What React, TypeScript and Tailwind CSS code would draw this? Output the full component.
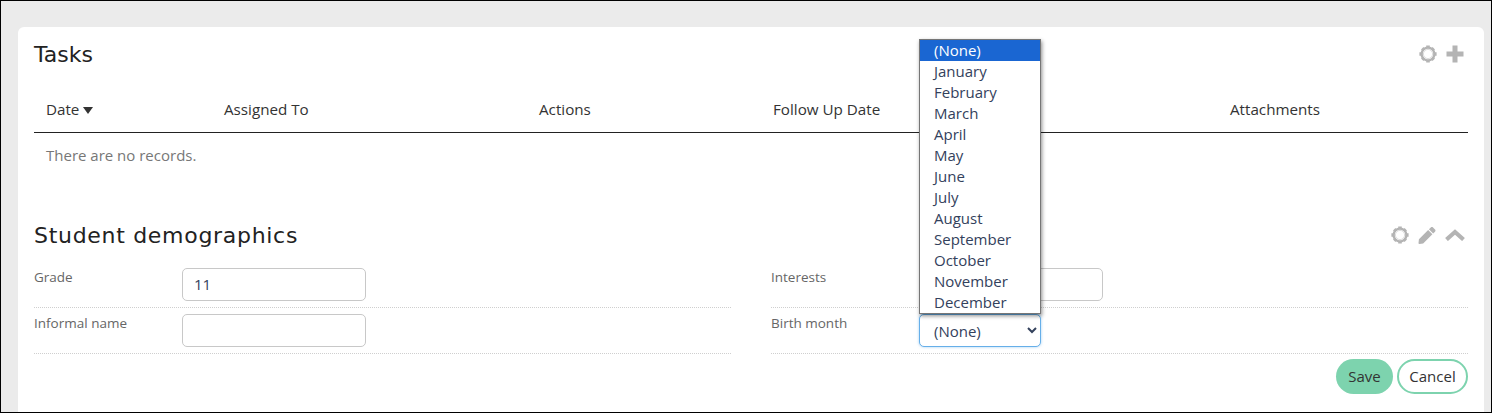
import { FaPen } from 'react-icons/fa'

const months = [
  '(None)',
  'January',
  'February',
  'March',
  'April',
  'May',
  'June',
  'July',
  'August',
  'September',
  'October',
  'November',
  'December',
]

const inputClasses =
  'h-[33px] w-[184px] rounded-[5px] border border-[#c8c8c8] bg-white px-[11px] pb-[2px] text-[15px] text-[#33415c] outline-none'

function Gear() {
  return (
    <svg viewBox="0 0 18 18" className="h-[18px] w-[18px]">
      <circle cx="9" cy="9" r="6.4" fill="none" stroke="#b4b4b4" strokeWidth="2.4" />
      <circle cx="9" cy="9" r="4.6" fill="none" stroke="#dedede" strokeWidth="1" />
      <path
        d="M7.2 0.4h3.6v2.6h-3.6zM7.2 15h3.6v2.6h-3.6zM0.4 7.2h2.6v3.6h-2.6zM15 7.2h2.6v3.6h-2.6zM2 4.4l2.4-2.4 1.8 1.8-2.4 2.4zM11.8 14.2l2.4-2.4 1.8 1.8-2.4 2.4zM13.6 2l2.4 2.4-1.8 1.8-2.4-2.4zM3.8 11.8l2.4 2.4-1.8 1.8-2.4-2.4z"
        fill="#b4b4b4"
      />
    </svg>
  )
}

function PlusIcon() {
  return (
    <svg viewBox="0 0 18 18" className="h-[18px] w-[18px]" fill="#b4b4b4">
      <path d="M6.5 0.5h5v6h6v5h-6v6h-5v-6h-6v-5h6z" />
    </svg>
  )
}

function ChevronIcon() {
  return (
    <svg viewBox="0 0 20 12" className="h-[12px] w-[20px]" fill="none" stroke="#b4b4b4" strokeWidth="4.2">
      <path d="M1.5 10.5L10 3l8.5 7.5" />
    </svg>
  )
}

function FieldRow({ label, children }: { label: string; children: React.ReactNode }) {
  return (
    <div className="flex h-[46px] border-b border-dotted border-[#cfcfcf] pt-[6px]">
      <label className="w-[148px] text-[13.5px] leading-[18px] text-[#666]">{label}</label>
      {children}
    </div>
  )
}

export default function App() {
  return (
    <div className="h-[413px] w-[1492px] overflow-hidden border border-black bg-[#ebebeb] pt-[26px] pl-[17px] pr-[7px] font-['Open_Sans',sans-serif]">
      <div className="relative h-[400px] rounded-[6px] bg-white px-4 pt-[12px]">
        <div className="flex h-[30px] items-center justify-between">
          <h2 className="font-['DejaVu_Sans',sans-serif] text-[22px] font-normal text-[#222]">Tasks</h2>
          <div className="mr-[4px] flex items-center gap-[9px]">
            <Gear />
            <PlusIcon />
          </div>
        </div>

        <div className="mt-[20px] grid h-[44px] grid-cols-[178px_315px_234px_457px_1fr] items-center border-b border-[#222] pb-[2px] pl-3 text-[15.2px] text-[#333]">
          <span className="flex items-center gap-[4px]">
            Date
            <span className="mt-[2px] border-x-[5px] border-t-[7px] border-x-transparent border-t-[#333]" />
          </span>
          <span>Assigned To</span>
          <span>Actions</span>
          <span>Follow Up Date</span>
          <span>Attachments</span>
        </div>
        <p className="mt-[11px] pl-3 text-[15px] leading-[22px] text-[#777]">There are no records.</p>

        <div className="mt-[54px] flex h-[30px] items-center justify-between">
          <h2 className="font-['DejaVu_Sans',sans-serif] text-[22px] font-normal tracking-[0.7px] text-[#222]">
            Student demographics
          </h2>
          <div className="mr-[3px] flex items-center gap-[9px]">
            <Gear />
            <FaPen className="h-[17px] w-[18px] text-[#b4b4b4]" />
            <ChevronIcon />
          </div>
        </div>

        <div className="mt-[12px] grid grid-cols-[697px_697px] gap-x-[40px]">
          <div>
            <FieldRow label="Grade">
              <input className={inputClasses} defaultValue="11" />
            </FieldRow>
            <FieldRow label="Informal name">
              <input className={inputClasses} />
            </FieldRow>
          </div>
          <div>
            <FieldRow label="Interests">
              <input className={inputClasses} />
            </FieldRow>
            <FieldRow label="Birth month">
              <select className="h-[33px] w-[122px] rounded-[5px] border border-[#66afe9] bg-white pl-[10px] text-[15px] text-[#33415c] shadow-[0_0_3px_rgba(102,175,233,0.6)] outline-none">
                <option>(None)</option>
              </select>
            </FieldRow>
          </div>
        </div>

        <div className="mt-[5px] flex justify-end gap-[4px] text-[15px] text-[#333]">
          <button className="h-[35px] w-[57px] rounded-full bg-[#7dd3ae]">Save</button>
          <button className="h-[35px] w-[71px] rounded-full border-2 border-[#7dd3ae] bg-white">Cancel</button>
        </div>

        {/* open select list sits over the table */}
        <ul className="absolute top-[12px] left-[901px] w-[122px] border border-[#767676] bg-white text-[15px] leading-[21px] text-[#33415c] shadow-[1px_2px_4px_rgba(0,0,0,0.45)]">
          {months.map((month, i) => (
            <li key={month} className={i === 0 ? 'bg-[#1a66d2] pl-[14px] text-white' : 'pl-[14px]'}>
              {month}
            </li>
          ))}
        </ul>
      </div>
    </div>
  )
}
